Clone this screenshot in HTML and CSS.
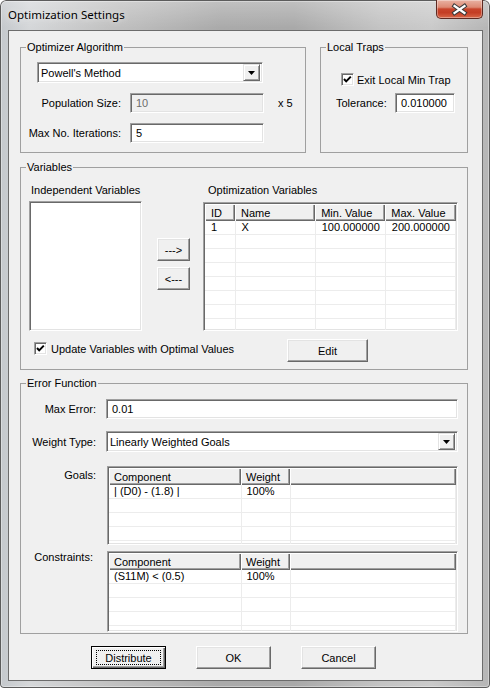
FILE: index.html
```html
<!DOCTYPE html>
<html>
<head>
<meta charset="utf-8">
<title>Optimization Settings</title>
<link rel="stylesheet" href="styles.css">
</head>
<body>
<div class="window">
  <div class="titlebar">
    <span class="title">Optimization Settings</span>
    <div class="close">
      <svg width="45" height="17" viewBox="0 0 45 17">
        <path d="M17.5 5 L27.5 12 M27.5 5 L17.5 12" stroke="#3a3a3a" stroke-width="4.2" stroke-linecap="square" fill="none"/>
        <path d="M17.5 5 L27.5 12 M27.5 5 L17.5 12" stroke="#ffffff" stroke-width="2.2" stroke-linecap="square" fill="none"/>
      </svg>
    </div>
  </div>
  <div class="client">
    <div class="top-row">
      <fieldset class="group g-opt">
        <legend>Optimizer Algorithm</legend>
        <div class="combo combo-alg"><span class="combo-text">Powell's Method</span><span class="combo-btn"><svg width="7" height="4" viewBox="0 0 7 4"><path d="M0 0 H7 L3.5 4 Z" fill="#000"/></svg></span></div>
        <div class="form-row row-pop">
          <span class="lbl lbl-opt">Population Size:</span>
          <div class="edit edit-opt disabled">10</div>
          <span class="suffix">x 5</span>
        </div>
        <div class="form-row row-iter">
          <span class="lbl lbl-opt">Max No. Iterations:</span>
          <div class="edit edit-opt">5</div>
        </div>
      </fieldset>
      <fieldset class="group g-traps">
        <legend>Local Traps</legend>
        <div class="check-row row-exit">
          <span class="chk"><svg width="11" height="11" viewBox="0 0 11 11"><path d="M2 5 L4.2 7.4 L8.8 2.6" stroke="#000" stroke-width="2" fill="none"/></svg></span>
          <span>Exit Local Min Trap</span>
        </div>
        <div class="form-row row-tol">
          <span class="lbl-tol">Tolerance:</span>
          <div class="edit edit-tol">0.010000</div>
        </div>
      </fieldset>
    </div>

    <fieldset class="group g-vars">
      <legend>Variables</legend>
      <div class="vars-main">
        <div class="col-indep">
          <div class="col-label">Independent Variables</div>
          <div class="listbox"></div>
        </div>
        <div class="col-move">
          <div class="btn btn-move">---&gt;</div>
          <div class="btn btn-move">&lt;---</div>
        </div>
        <div class="col-opt">
          <div class="col-label col-label-opt">Optimization Variables</div>
          <div class="listview lv-vars">
            <table class="grid">
              <colgroup><col class="c-id"><col class="c-name"><col class="c-min"><col class="c-max"></colgroup>
              <thead><tr><th>ID</th><th>Name</th><th>Min. Value</th><th>Max. Value</th></tr></thead>
              <tbody>
                <tr><td>1</td><td>X</td><td>100.000000</td><td>200.000000</td></tr>
                <tr><td></td><td></td><td></td><td></td></tr>
                <tr><td></td><td></td><td></td><td></td></tr>
                <tr><td></td><td></td><td></td><td></td></tr>
                <tr><td></td><td></td><td></td><td></td></tr>
                <tr><td></td><td></td><td></td><td></td></tr>
                <tr><td></td><td></td><td></td><td></td></tr>
                <tr><td></td><td></td><td></td><td></td></tr>
              </tbody>
            </table>
          </div>
        </div>
      </div>
      <div class="vars-bottom">
        <div class="check-row row-update">
          <span class="chk"><svg width="11" height="11" viewBox="0 0 11 11"><path d="M2 5 L4.2 7.4 L8.8 2.6" stroke="#000" stroke-width="2" fill="none"/></svg></span>
          <span>Update Variables with Optimal Values</span>
        </div>
        <div class="btn btn-edit">Edit</div>
      </div>
    </fieldset>

    <fieldset class="group g-err">
      <legend>Error Function</legend>
      <div class="form-row err-row row-maxerr">
        <span class="lbl lbl-err">Max Error:</span>
        <div class="edit edit-wide">0.01</div>
      </div>
      <div class="form-row err-row row-weight">
        <span class="lbl lbl-err">Weight Type:</span>
        <div class="combo combo-wide"><span class="combo-text">Linearly Weighted Goals</span><span class="combo-btn"><svg width="7" height="4" viewBox="0 0 7 4"><path d="M0 0 H7 L3.5 4 Z" fill="#000"/></svg></span></div>
      </div>
      <div class="table-row row-goals">
        <span class="lbl lbl-err lbl-goals">Goals:</span>
        <div class="listview lv-goals">
          <table class="grid">
            <colgroup><col class="c-comp"><col class="c-weight"><col></colgroup>
            <thead><tr><th>Component</th><th>Weight</th><th></th></tr></thead>
            <tbody>
              <tr><td>| (D0) - (1.8) |</td><td>100%</td><td></td></tr>
              <tr><td></td><td></td><td></td></tr>
              <tr><td></td><td></td><td></td></tr>
              <tr><td></td><td></td><td></td></tr>
              <tr><td></td><td></td><td></td></tr>
            </tbody>
          </table>
        </div>
      </div>
      <div class="table-row row-cons">
        <span class="lbl lbl-err lbl-cons">Constraints:</span>
        <div class="listview lv-cons">
          <table class="grid">
            <colgroup><col class="c-comp"><col class="c-weight"><col></colgroup>
            <thead><tr><th>Component</th><th>Weight</th><th></th></tr></thead>
            <tbody>
              <tr><td>(S11M) &lt; (0.5)</td><td>100%</td><td></td></tr>
              <tr><td></td><td></td><td></td></tr>
              <tr><td></td><td></td><td></td></tr>
              <tr><td></td><td></td><td></td></tr>
              <tr><td></td><td></td><td></td></tr>
            </tbody>
          </table>
        </div>
      </div>
    </fieldset>

    <div class="button-row">
      <div class="btn btn-dlg btn-default"><span class="focus">Distribute</span></div>
      <div class="btn btn-dlg">OK</div>
      <div class="btn btn-dlg">Cancel</div>
    </div>
  </div>
</div>
</body>
</html>
```

FILE: styles.css
```css
html, body {
  margin: 0;
  padding: 0;
  background: #ffffff;
}

.window {
  box-sizing: border-box;
  width: 490px;
  height: 688px;
  padding: 0 7px 7px 8px;
  display: flex;
  flex-direction: column;
  border-radius: 6px 6px 4px 4px;
  background:
    linear-gradient(180deg, rgba(255,255,255,0.28) 0px, rgba(255,255,255,0) 28px),
    linear-gradient(90deg, #c4c8cc 0%, #d5d7d9 6%, #c2c2c2 22%, #aaaaaa 45%, #a9a9a9 60%, #c4c4c4 78%, #cacaca 88%, #b5b5b5 100%);
  box-shadow: inset 0 0 0 1px #5c5c5c, inset 0 0 0 2px rgba(255,255,255,0.35);
  font-family: "Liberation Sans", Arial, sans-serif;
  font-size: 11px;
  color: #000;
}

.titlebar {
  height: 30px;
  flex: 0 0 30px;
  display: flex;
  justify-content: space-between;
  align-items: flex-start;
}

.title {
  font-family: "Noto Sans", "Liberation Sans", sans-serif;
  font-size: 11.5px;
  line-height: 16px;
  padding-top: 7px;
  color: #000;
  text-shadow: 0 0 6px rgba(255,255,255,0.8);
}

.close {
  width: 47px;
  height: 19px;
  box-sizing: border-box;
  border: 1px solid #5e2a22;
  border-top: none;
  border-radius: 0 0 5px 5px;
  background: linear-gradient(180deg, #e9b2a3 0%, #dd8a74 40%, #c8452c 50%, #c43d24 70%, #d86747 100%);
  box-shadow: inset 0 0 0 1px rgba(255,255,255,0.35);
  display: flex;
  align-items: center;
  justify-content: center;
}

.client {
  flex: 1;
  box-sizing: border-box;
  border: 1px solid #6c6c6c;
  background: #f0f0f0;
  padding: 10px 14px 0 11px;
  display: flex;
  flex-direction: column;
}

/* group boxes */
.group {
  box-sizing: border-box;
  margin: 0;
  padding: 0;
  min-width: 0;
  border: 1px solid #a0a0a0;
}
.group > legend {
  margin-left: 5px;
  padding: 0 1px;
  line-height: 13px;
  font-size: 11px;
}

.top-row {
  display: flex;
  gap: 14px;
}
.g-opt { width: 286px; height: 112px; }
.g-traps { width: 148px; height: 112px; }
.g-vars { width: 448px; height: 209px; margin-top: 8px; }
.g-err { width: 448px; height: 257px; margin-top: 7px; }

/* controls */
.edit {
  box-sizing: border-box;
  height: 20px;
  line-height: 18px;
  padding-left: 5px;
  background: #fff;
  border: 1px solid;
  border-color: #a0a0a0 #ffffff #ffffff #a0a0a0;
  box-shadow: inset 1px 1px #696969, inset -1px -1px #e3e3e3;
  white-space: nowrap;
}
.edit.disabled {
  background: #f0f0f0;
  color: #6d6d6d;
}

.combo {
  box-sizing: border-box;
  height: 21px;
  display: flex;
  align-items: center;
  justify-content: space-between;
  background: #fff;
  border: 1px solid;
  border-color: #a0a0a0 #ffffff #ffffff #a0a0a0;
  box-shadow: inset 1px 1px #696969, inset -1px -1px #e3e3e3;
  padding: 1px 2px 1px 3px;
}
.combo-text { white-space: nowrap; }
.combo-btn {
  box-sizing: border-box;
  width: 17px;
  height: 17px;
  background: #f0f0f0;
  border: 1px solid;
  border-color: #e3e3e3 #696969 #696969 #e3e3e3;
  box-shadow: inset 1px 1px #fff, inset -1px -1px #a0a0a0;
  display: flex;
  align-items: center;
  justify-content: center;
}

.btn {
  box-sizing: border-box;
  height: 23px;
  background: #f0f0f0;
  border: 1px solid;
  border-color: #ffffff #696969 #696969 #ffffff;
  box-shadow: inset -1px -1px #a0a0a0, inset 1px 1px #e3e3e3;
  display: flex;
  align-items: center;
  justify-content: center;
  white-space: nowrap;
}

.chk {
  box-sizing: border-box;
  width: 13px;
  height: 13px;
  flex: 0 0 13px;
  background: #fff;
  border: 1px solid;
  border-color: #a0a0a0 #ffffff #ffffff #a0a0a0;
  box-shadow: inset 1px 1px #696969, inset -1px -1px #e3e3e3;
  display: flex;
  align-items: center;
  justify-content: center;
}

.form-row {
  display: flex;
  align-items: center;
}
.check-row {
  display: flex;
  align-items: center;
  gap: 3px;
  white-space: nowrap;
}

/* optimizer group */
.combo-alg {
  width: 226px;
  margin: 8px 0 0 16px;
}
.row-pop { margin-top: 10px; }
.row-iter { margin-top: 10px; }
.lbl {
  text-align: right;
  white-space: nowrap;
}
.lbl-opt { width: 100px; margin-right: 9px; }
.edit-opt { width: 134px; }
.suffix { margin-left: 14px; }

/* traps group */
.row-exit { margin: 19px 0 0 20px; }
.row-tol { margin: 7px 0 0 15px; }
.lbl-tol { width: 59px; }
.edit-tol { width: 60px; padding-left: 5px; }

/* variables group */
.vars-main {
  display: flex;
  align-items: flex-start;
}
.col-label {
  line-height: 13px;
  margin-top: 10px;
  white-space: nowrap;
}
.col-indep {
  margin-left: 8px;
  width: 113px;
  display: flex;
  flex-direction: column;
}
.col-indep .col-label { padding-left: 2px; }
.listbox {
  box-sizing: border-box;
  margin-top: 4px;
  height: 130px;
  background: #fff;
  border: 1px solid;
  border-color: #a0a0a0 #ffffff #ffffff #a0a0a0;
  box-shadow: inset 1px 1px #696969, inset -1px -1px #e3e3e3;
}
.col-move {
  margin-left: 15px;
  margin-top: 64px;
  width: 33px;
  display: flex;
  flex-direction: column;
  gap: 6px;
}
.btn-move { width: 33px; }
.col-opt {
  margin-left: 13px;
  width: 255px;
  display: flex;
  flex-direction: column;
}
.col-label-opt { padding-left: 5px; }

.listview {
  box-sizing: border-box;
  background: #fff;
  border: 1px solid;
  border-color: #a0a0a0 #ffffff #ffffff #a0a0a0;
  box-shadow: inset 1px 1px #696969, inset -1px -1px #e3e3e3;
  padding: 1px;
  overflow: hidden;
}
.lv-vars { margin-top: 5px; height: 129px; }

.grid {
  border-collapse: collapse;
  table-layout: fixed;
  width: 100%;
  font-size: 11px;
}
.grid th {
  height: 17px;
  padding: 0 0 0 6px;
  text-align: left;
  font-weight: normal;
  background: #f0f0f0;
  box-shadow: inset 1px 1px #ffffff, inset -1px -1px #696969, inset -2px -2px #a0a0a0;
  white-space: nowrap;
  overflow: hidden;
  box-sizing: border-box;
}
.grid td {
  height: 13px;
  line-height: 13px;
  padding: 0 0 0 6px;
  border-right: 1px solid #ececec;
  border-bottom: 1px solid #ececec;
  white-space: nowrap;
  overflow: hidden;
}
.c-id { width: 30px; }
.c-name { width: 80px; }
.c-min { width: 70px; }
.c-max { width: 70px; }
.c-comp { width: 132px; }
.c-weight { width: 49px; }

.vars-bottom {
  display: flex;
  align-items: flex-start;
  margin-top: 8px;
}
.row-update {
  margin: 3px 0 0 13px;
  width: 253px;
  flex: 0 0 253px;
  gap: 4px;
}
.btn-edit { width: 81px; }

/* error function group */
.lbl-err { width: 75px; margin-right: 10px; }
.row-maxerr { margin-top: 9px; }
.row-weight { margin-top: 12px; }
.edit-wide { width: 352px; }
.combo-wide { width: 352px; }
.table-row {
  display: flex;
  align-items: flex-start;
}
.row-goals { margin-top: 14px; }
.row-cons { margin-top: 6px; }
.lbl-goals { padding-top: 3px; box-sizing: border-box; }
.lbl-cons { padding-right: 3px; box-sizing: border-box; }
.lv-goals { margin-left: 1px; width: 351px; height: 79px; }
.lv-cons { margin-left: 1px; width: 351px; height: 81px; }
.lv-goals .grid th, .lv-cons .grid th { padding-left: 5px; }
.lv-goals .grid td, .lv-cons .grid td { padding-left: 5px; }

/* dialog buttons */
.button-row {
  display: flex;
  gap: 30px;
  margin: 12px 0 0 71px;
}
.btn-dlg { width: 75px; }
.btn-default {
  border: 1px solid #000;
  box-shadow: inset 1px 1px #ffffff, inset -1px -1px #696969, inset -2px -2px #a0a0a0;
  padding: 3px 4px;
  align-items: stretch;
}
.focus {
  flex: 1;
  border: 1px dotted #000;
  display: flex;
  align-items: center;
  justify-content: center;
}
```
